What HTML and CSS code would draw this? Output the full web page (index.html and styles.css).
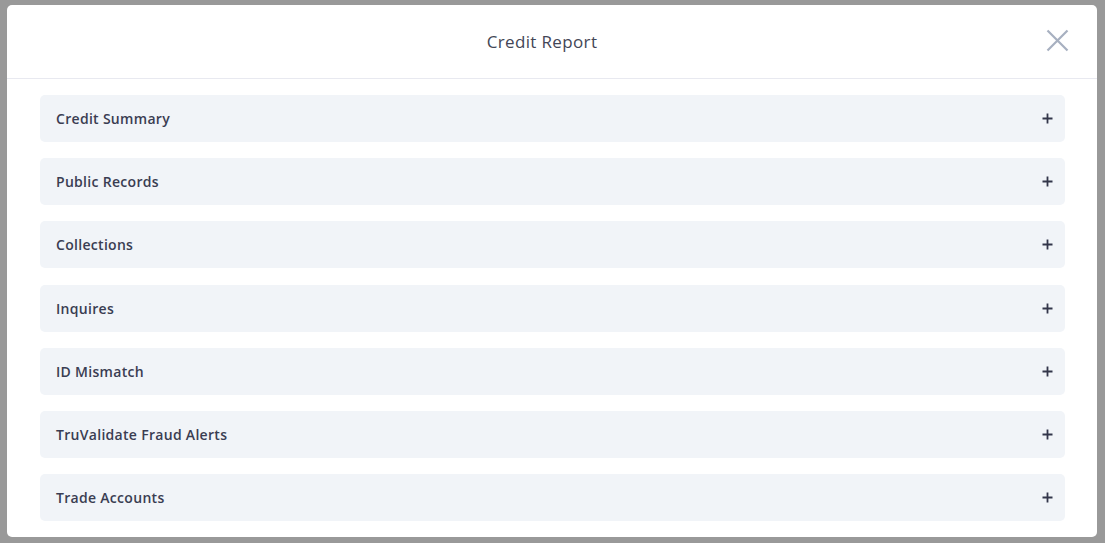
FILE: index.html
```html
<!DOCTYPE html>
<html lang="en">
<head>
    <meta charset="UTF-8">
    <meta name="viewport" content="width=device-width, initial-scale=1.0">
    <title>Credit Report</title>
    <link rel="stylesheet" href="styles.css">
</head>
<body>
    <div class="overlay">
        <div class="modal">
            <div class="modal-header">
                <h2>Credit Report</h2>
                <span class="close">
                    <svg width="23" height="23" viewBox="0 0 23 23">
                        <path d="M1.5 1.5 L21.5 21.5 M21.5 1.5 L1.5 21.5" stroke="#a7b0c0" stroke-width="2.2" fill="none"/>
                    </svg>
                </span>
            </div>
            <div class="modal-body">
                <div class="section"><span>Credit Summary</span><svg class="plus" width="11" height="11" viewBox="0 0 11 11"><path d="M5.5 0.5 V10.5 M0.5 5.5 H10.5"/></svg></div>
                <div class="section"><span>Public Records</span><svg class="plus" width="11" height="11" viewBox="0 0 11 11"><path d="M5.5 0.5 V10.5 M0.5 5.5 H10.5"/></svg></div>
                <div class="section"><span>Collections</span><svg class="plus" width="11" height="11" viewBox="0 0 11 11"><path d="M5.5 0.5 V10.5 M0.5 5.5 H10.5"/></svg></div>
                <div class="section"><span>Inquires</span><svg class="plus" width="11" height="11" viewBox="0 0 11 11"><path d="M5.5 0.5 V10.5 M0.5 5.5 H10.5"/></svg></div>
                <div class="section"><span>ID Mismatch</span><svg class="plus" width="11" height="11" viewBox="0 0 11 11"><path d="M5.5 0.5 V10.5 M0.5 5.5 H10.5"/></svg></div>
                <div class="section"><span>TruValidate Fraud Alerts</span><svg class="plus" width="11" height="11" viewBox="0 0 11 11"><path d="M5.5 0.5 V10.5 M0.5 5.5 H10.5"/></svg></div>
                <div class="section"><span>Trade Accounts</span><svg class="plus" width="11" height="11" viewBox="0 0 11 11"><path d="M5.5 0.5 V10.5 M0.5 5.5 H10.5"/></svg></div>
            </div>
        </div>
    </div>
</body>
</html>
```

FILE: styles.css
```css
body {
    margin: 0;
    padding: 0;
    font-family: "Open Sans", Arial, sans-serif;
    background-color: #999999;
}

.overlay {
    height: 543px;
    padding: 5px 8px 0 7px;
    box-sizing: border-box;
}

.modal {
    background-color: #fff;
    border-radius: 5px;
    overflow: hidden;
}

.modal-header {
    height: 73px;
    border-bottom: 1px solid #e8e9f0;
    display: flex;
    align-items: center;
    justify-content: center;
    position: relative;
}

.modal-header h2 {
    margin: 0 20px 0 0;
    font-size: 17px;
    font-weight: 500;
    color: #434656;
    letter-spacing: 0.35px;
}

.close {
    position: absolute;
    right: 28px;
    top: 24px;
    line-height: 0;
}

.modal-body {
    padding: 16px 32px 16px 33px;
    display: flex;
    flex-direction: column;
    gap: 16.2px;
}

.section {
    height: 47px;
    background-color: #f1f4f8;
    border-radius: 5px;
    display: flex;
    align-items: center;
    justify-content: space-between;
    padding: 0 12px 0 16px;
    font-size: 14px;
    font-weight: 600;
    color: #3a3d52;
    letter-spacing: 0.3px;
}

.plus {
    stroke: #33364a;
    stroke-width: 1.8;
    fill: none;
}
```
